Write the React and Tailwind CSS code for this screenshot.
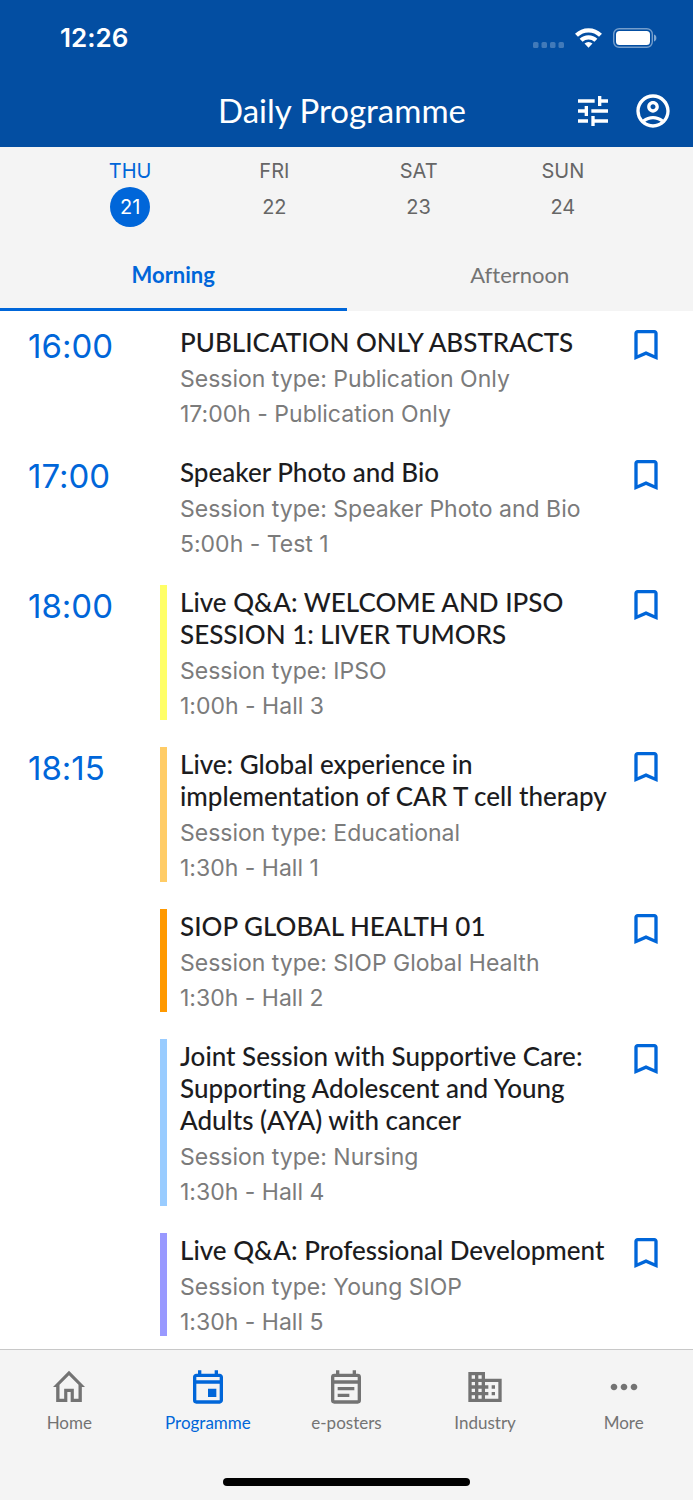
import { useState } from "react";
import {
  MdMoreHoriz,
  MdOutlineAccountCircle,
  MdOutlineBookmarkBorder,
  MdOutlineBusiness,
  MdOutlineEvent,
  MdTune,
} from "react-icons/md";

const DAYS = [
  { name: "THU", date: 21 },
  { name: "FRI", date: 22 },
  { name: "SAT", date: 23 },
  { name: "SUN", date: 24 },
];

const SLOTS = [
  {
    time: "16:00",
    sessions: [
      { title: "PUBLICATION ONLY ABSTRACTS", type: "Publication Only", place: "17:00h - Publication Only", bar: "bg-transparent" },
    ],
  },
  {
    time: "17:00",
    sessions: [
      { title: "Speaker Photo and Bio", type: "Speaker Photo and Bio", place: "5:00h - Test 1", bar: "bg-transparent" },
    ],
  },
  {
    time: "18:00",
    sessions: [
      { title: "Live Q&A: WELCOME AND IPSO SESSION 1: LIVER TUMORS", type: "IPSO", place: "1:00h - Hall 3", bar: "bg-[#ffff66]" },
    ],
  },
  {
    time: "18:15",
    sessions: [
      { title: "Live: Global experience in implementation of CAR T cell therapy", type: "Educational", place: "1:30h - Hall 1", bar: "bg-[#ffcc66]" },
      { title: "SIOP GLOBAL HEALTH 01", type: "SIOP Global Health", place: "1:30h - Hall 2", bar: "bg-[#ff9900]" },
      { title: "Joint Session with Supportive Care: Supporting Adolescent and Young Adults (AYA) with cancer", type: "Nursing", place: "1:30h - Hall 4", bar: "bg-[#99ccff]" },
      { title: "Live Q&A: Professional Development", type: "Young SIOP", place: "1:30h - Hall 5", bar: "bg-[#9999ff]" },
    ],
  },
];

function HomeIcon({ className }) {
  return (
    <svg viewBox="0 0 24 24" fill="currentColor" fillRule="evenodd" className={className}>
      <path d="M12 2.200L2.400 12h1.900v9H11v-6h2v6h6.700v-9h1.900zM12 5L6.300 10.700V19h2.800v-6h5.800v6h2.800v-8.300z" />
    </svg>
  );
}

function PostersIcon({ className }) {
  return (
    <svg viewBox="0 0 24 24" fill="currentColor" fillRule="evenodd" className={className}>
      <path d="M19 4h-1V2h-2v2H8V2H6v2H5a2 2 0 0 0-2 2v14a2 2 0 0 0 2 2h14a2 2 0 0 0 2-2V6a2 2 0 0 0-2-2zM5 6h14v2H5zM5 10h14v10H5z" />
      <path d="M7 12h10v2H7zM7 16h7v2H7z" />
    </svg>
  );
}

const NAV = [
  { label: "Home", icon: HomeIcon },
  { label: "Programme", icon: MdOutlineEvent },
  { label: "e-posters", icon: PostersIcon },
  { label: "Industry", icon: MdOutlineBusiness },
  { label: "More", icon: MdMoreHoriz },
];

function StatusBar() {
  return (
    <div className="flex h-[76px] items-center justify-between pr-9 pl-[60px]">
      <span className="font-[Inter,sans-serif] text-[26px] leading-8 font-semibold">12:26</span>
      <div className="flex items-center gap-[11px]">
        <svg viewBox="0 0 31 20" fill="currentColor" className="h-5 w-[31px] opacity-25">
          <rect x="0" y="14" width="5.5" height="6" rx="1.6" />
          <rect x="8.5" y="14" width="5.5" height="6" rx="1.6" />
          <rect x="17" y="14" width="5.5" height="6" rx="1.6" />
          <rect x="25.5" y="14" width="5.5" height="6" rx="1.6" />
        </svg>
        <svg viewBox="0 0 27 20" fill="none" stroke="currentColor" strokeWidth="4.2" className="h-5 w-[27px]">
          <path d="M1.5 7.3a17 17 0 0 1 24 0" />
          <path d="M6.100 12.300a10.600 10.600 0 0 1 14.800 0" />
          <path d="M13.5 19.8l-4-4.3a6 6 0 0 1 8 0z" fill="currentColor" stroke="none" />
        </svg>
        <svg viewBox="0 0 44 20" className="h-5 w-11">
          <rect x="0.7" y="0.7" width="38.6" height="18.6" rx="5.5" fill="none" stroke="white" strokeOpacity="0.45" strokeWidth="1.4" />
          <rect x="3" y="3" width="34" height="14" rx="3.5" fill="white" />
          <path d="M41 6.5c1.6.6 2.4 1.9 2.4 3.5s-.8 2.900-2.4 3.500z" fill="white" fillOpacity="0.5" />
        </svg>
      </div>
    </div>
  );
}

function Session({ session }) {
  const [saved, setSaved] = useState(false);

  return (
    <li className="flex">
      <span className={`w-[7px] shrink-0 ${session.bar}`} />
      <div className="min-w-0 flex-1 pt-px pb-[2px] pl-[13px]">
        <h2 className="text-[26px] leading-8 font-medium text-[#1c1c1e]">{session.title}</h2>
        <div className="mt-[9px] flex flex-col gap-[11px] font-[Inter,sans-serif] text-[23px] leading-6 text-[#7b7b7b]">
          <p>Session type: {session.type}</p>
          <p>{session.place}</p>
        </div>
      </div>
      <button
        type="button"
        aria-label={`Bookmark ${session.title}`}
        aria-pressed={saved}
        onClick={() => setSaved(!saved)}
        className="h-10 w-10 shrink-0 text-[#0066d9]"
      >
        <MdOutlineBookmarkBorder className="h-10 w-10" />
      </button>
    </li>
  );
}

export default function App() {
  const [day, setDay] = useState(21);
  const [period, setPeriod] = useState("Morning");
  const [page, setPage] = useState("Programme");

  return (
    <div className="flex min-h-screen flex-col bg-white font-[Lato,sans-serif] [font-variant-ligatures:none]">
      <header className="bg-[#034ea2] text-white">
        <StatusBar />
        <div className="flex h-[71px] items-center pr-5 pb-[2px] pl-[111px]">
          <h1 className="flex-1 pb-[2px] text-center text-[33px] leading-10">Daily Programme</h1>
          <div className="flex gap-5">
            <button type="button" aria-label="Filter">
              <MdTune className="h-10 w-10" />
            </button>
            <button type="button" aria-label="Account">
              <MdOutlineAccountCircle className="h-10 w-10" />
            </button>
          </div>
        </div>
      </header>

      <div className="bg-[#f4f4f4]">
        <div className="grid grid-cols-4 px-[58px] pt-3 pb-3 font-[Inter,sans-serif] text-[20px] leading-6">
          {DAYS.map((d) => (
            <button
              key={d.date}
              type="button"
              onClick={() => setDay(d.date)}
              className={`flex flex-col items-center gap-1 ${d.date === day ? "text-[#0066d9]" : "text-[#666666]"}`}
            >
              <span>{d.name}</span>
              <span
                className={`flex h-10 w-10 items-center justify-center rounded-full ${d.date === day ? "bg-[#0066d9] text-white" : ""}`}
              >
                {d.date}
              </span>
            </button>
          ))}
        </div>
        <div className="grid grid-cols-2" role="tablist">
          {["Morning", "Afternoon"].map((p) => (
            <button
              key={p}
              type="button"
              role="tab"
              aria-selected={p === period}
              onClick={() => setPeriod(p)}
              className={`h-[72px] border-b-[3px] pt-[2px] text-[22px] leading-7 ${
                p === period ? "border-[#0066d9] font-bold text-[#0066d9]" : "border-transparent text-[#737373]"
              }`}
            >
              {p}
            </button>
          ))}
        </div>
      </div>

      <main className="flex flex-1 flex-col gap-[27px] pt-[14px] pr-[27px] pb-[13px] pl-7">
        {SLOTS.map((slot) => (
          <section key={slot.time} className="flex">
            <time className="w-[132px] shrink-0 pt-px font-[Inter,sans-serif] text-[33px] leading-10 text-[#0066d9]">
              {slot.time}
            </time>
            <ul className="flex min-w-0 flex-1 flex-col gap-[27px]">
              {slot.sessions.map((s) => (
                <Session key={s.title} session={s} />
              ))}
            </ul>
          </section>
        ))}
      </main>

      <footer className="border-t border-[#c8c8c8] bg-[#f4f4f4] pt-[17px] pb-[14px]">
        <nav className="grid grid-cols-5">
          {NAV.map(({ label, icon: Icon }) => (
            <a
              key={label}
              href="#"
              onClick={() => setPage(label)}
              className={`flex flex-col items-center gap-1 text-[17px] leading-6 ${label === page ? "text-[#0066d9]" : "text-[#737373]"}`}
            >
              <Icon className="h-10 w-10" />
              {label}
            </a>
          ))}
        </nav>
        <div className="mx-auto mt-[43px] h-2 w-[247px] rounded-full bg-black" />
      </footer>
    </div>
  );
}
